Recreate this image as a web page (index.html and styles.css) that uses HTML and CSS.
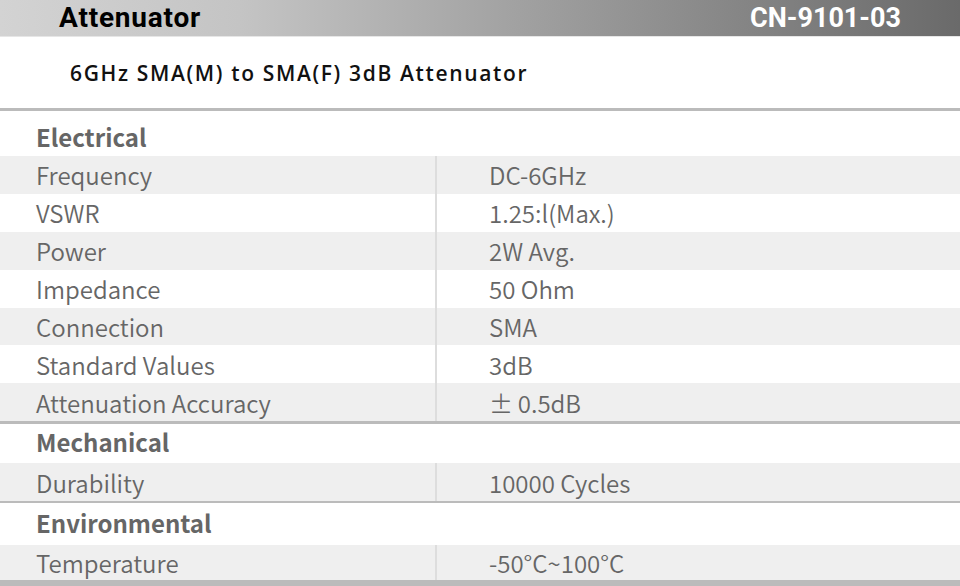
FILE: index.html
```html
<!DOCTYPE html>
<html>
<head>
<meta charset="utf-8">
<link rel="stylesheet" href="styles.css">
</head>
<body>
<div class="page">
  <header class="topbar">
    <span class="title">Attenuator</span>
    <span class="code">CN-9101-03</span>
  </header>
  <div class="subtitle">6GHz SMA(M) to SMA(F) 3dB Attenuator</div>
  <div class="rule"></div>

  <section class="group group-electrical">
    <div class="heading">Electrical</div>
    <div class="row shade"><div class="k">Frequency</div><div class="v">DC-6GHz</div></div>
    <div class="row"><div class="k">VSWR</div><div class="v">1.25:l(Max.)</div></div>
    <div class="row shade"><div class="k">Power</div><div class="v">2W Avg.</div></div>
    <div class="row"><div class="k">Impedance</div><div class="v">50 Ohm</div></div>
    <div class="row shade"><div class="k">Connection</div><div class="v">SMA</div></div>
    <div class="row"><div class="k">Standard Values</div><div class="v">3dB</div></div>
    <div class="row shade"><div class="k">Attenuation Accuracy</div><div class="v">±&#8201;0.5dB</div></div>
  </section>
  <div class="rule"></div>

  <section class="group group-mech">
    <div class="heading">Mechanical</div>
    <div class="row shade"><div class="k">Durability</div><div class="v">10000 Cycles</div></div>
  </section>
  <div class="rule rule-thin"></div>

  <section class="group group-env">
    <div class="heading">Environmental</div>
    <div class="row shade row-last"><div class="k">Temperature</div><div class="v">-50°C~100°C</div></div>
  </section>
  <div class="rule rule-bottom"></div>
</div>
</body>
</html>
```

FILE: styles.css
```css
* { box-sizing: border-box; }
html, body { margin: 0; padding: 0; background: #fff; }
body { width: 960px; height: 586px; overflow: hidden; }

.page { display: flex; flex-direction: column; }

.topbar {
  height: 37px;
  flex: none;
  display: flex;
  align-items: center;
  justify-content: space-between;
  padding: 0 59px 1px 59px;
  background: linear-gradient(to right, #d3d3d3 0%, #c4c4c4 25%, #a0a0a0 55%, #6a6a6a 100%);
  border-bottom: 1px solid #e6e6e6;
  font-family: Roboto, "Liberation Sans", sans-serif;
  font-weight: 700;
  font-size: 27px;
  line-height: 34px;
}
.title { color: #000; font-size: 28px; letter-spacing: 0.8px; }
.code { color: #fff; }

.subtitle {
  height: 71px;
  flex: none;
  display: flex;
  align-items: center;
  padding-left: 70px;
  font-family: "Open Sans", "Noto Sans", sans-serif;
  font-weight: 600;
  font-size: 21px;
  color: #111;
  letter-spacing: 1.65px;
}

.rule { height: 3px; flex: none; background: #bbbbbb; }
.rule-thin { height: 2px; }
.rule-bottom { height: 6px; }

.group {
  font-family: "Noto Sans CJK SC", "Source Han Sans SC", sans-serif;
  font-size: 24px;
  color: #666;
}
.heading {
  display: flex;
  align-items: center;
  padding-left: 36px;
  font-weight: 700;
  height: 39px;
  padding-bottom: 5px;
}
.group-electrical .heading { height: 45px; padding-top: 6px; padding-bottom: 0; }
.group-env .heading { height: 42px; padding-bottom: 4px; }

.row {
  display: grid;
  grid-template-columns: 437px 1fr;
  height: 37.9px;
}
.row.shade { background: #efefef; }
.row-last { height: 35px; padding-bottom: 4px; }
.k {
  display: flex;
  align-items: center;
  padding-left: 36px;
  border-right: 2px solid #dddddd;
  font-weight: 350;
}
.v {
  display: flex;
  align-items: center;
  padding-left: 52px;
  font-weight: 350;
}
```
